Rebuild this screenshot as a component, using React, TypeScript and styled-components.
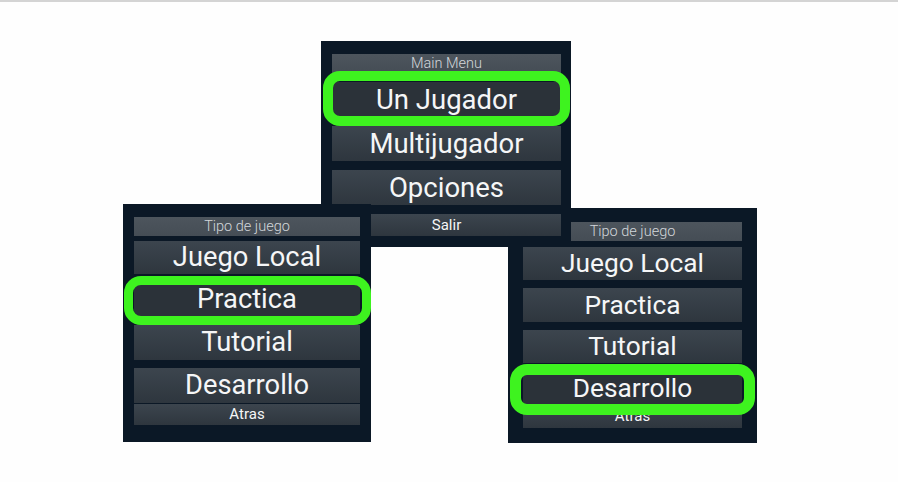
import React from "react";
import styled, { createGlobalStyle, css } from "styled-components";

const Global = createGlobalStyle`
  html, body { margin: 0; padding: 0; background: #fefefe; }
  body { font-family: Roboto, "Noto Sans", Arial, sans-serif; }
`;

const Page = styled.div`
  position: relative;
  width: 898px;
  height: 482px;
  overflow: hidden;
  background: #fefefe;
`;

const TopRule = styled.div`
  height: 2px;
  background: #d4d4d4;
`;

const Window = styled.section<{
  $x: number; $y: number; $w: number; $h: number;
  $pt: number; $pl: number; $pr: number; $z: number;
}>`
  position: absolute;
  left: ${(p) => p.$x}px;
  top: ${(p) => p.$y}px;
  width: ${(p) => p.$w}px;
  height: ${(p) => p.$h}px;
  z-index: ${(p) => p.$z};
  box-sizing: border-box;
  padding: ${(p) => `${p.$pt}px ${p.$pr}px 0 ${p.$pl}px`};
  background: #0b1826;
  display: flex;
  flex-direction: column;
`;

const Header = styled.div`
  flex: 0 0 19px;
  min-height: 0;
  background: linear-gradient(#4d555d, #454d55);
  color: #d3d7db;
  font-size: 14.5px;
  font-weight: 300;
  line-height: 19px;
  text-align: center;
  white-space: nowrap;
`;

const Item = styled.div<{
  $h: number; $mt: number; $fs: number; $small?: boolean;
  $selected?: boolean; $ring?: string; $rw?: number;
}>`
  position: relative;
  flex: 0 0 ${(p) => p.$h}px;
  min-height: 0;
  margin-top: ${(p) => p.$mt}px;
  background: linear-gradient(#3c454e, #2e363e);
  color: #f5f6f7;
  font-size: ${(p) => p.$fs}px;
  font-weight: 400;
  line-height: ${(p) => p.$h}px;
  text-align: center;
  white-space: nowrap;
  ${(p) =>
    p.$selected &&
    css`
      background: #2b3239;
      border-radius: 4px;
      &::after {
        content: "";
        position: absolute;
        inset: ${p.$ring};
        border: ${p.$rw}px solid #3ef31f;
        border-radius: 17px;
        z-index: 1;
      }
    `}
`;

type Row = { label: string; h: number; mt: number; small?: boolean; selected?: boolean };
type Menu = {
  x: number; y: number; w: number; h: number; pt: number; pl: number; pr: number; z: number;
  title: string; fs: number; ring: string; rw: number; rows: Row[];
};

const menus: Menu[] = [
  {
    x: 508, y: 208, w: 249, h: 235, pt: 14, pl: 15, pr: 15, z: 1,
    title: "Tipo de juego", fs: 26.3, ring: "-8px -13px -10px -13px", rw: 11,
    rows: [
      { label: "Juego Local", h: 33, mt: 6 },
      { label: "Practica", h: 34, mt: 8 },
      { label: "Tutorial", h: 33, mt: 8 },
      { label: "Desarrollo", h: 33, mt: 9, selected: true },
      { label: "Atras", h: 23, mt: 0, small: true },
    ],
  },
  {
    x: 321, y: 41, w: 250, h: 206, pt: 13, pl: 11, pr: 10, z: 2,
    title: "Main Menu", fs: 27.5, ring: "-11px -9px -9px -9px", rw: 10,
    rows: [
      { label: "Un Jugador", h: 35, mt: 9, selected: true },
      { label: "Multijugador", h: 35, mt: 9 },
      { label: "Opciones", h: 35, mt: 9 },
      { label: "Salir", h: 22, mt: 9, small: true },
    ],
  },
  {
    x: 123, y: 204, w: 248, h: 238, pt: 13, pl: 11, pr: 11, z: 3,
    title: "Tipo de juego", fs: 27.3, ring: "-6px -11px -9px -10px", rw: 9,
    rows: [
      { label: "Juego Local", h: 33, mt: 5 },
      { label: "Practica", h: 34, mt: 8, selected: true },
      { label: "Tutorial", h: 35, mt: 9 },
      { label: "Desarrollo", h: 35, mt: 8 },
      { label: "Atras", h: 21, mt: 1, small: true },
    ],
  },
];

export default function App() {
  return (
    <>
      <Global />
      <Page>
        <TopRule />
        {menus.map((m, i) => (
          <Window key={i} $x={m.x} $y={m.y} $w={m.w} $h={m.h} $pt={m.pt} $pl={m.pl} $pr={m.pr} $z={m.z}>
            <Header>{m.title}</Header>
            {m.rows.map((r) => (
              <Item
                key={r.label}
                $h={r.h}
                $mt={r.mt}
                $fs={r.small ? 15 : m.fs}
                $small={r.small}
                $selected={r.selected}
                $ring={m.ring}
                $rw={m.rw}
              >
                {r.label}
              </Item>
            ))}
          </Window>
        ))}
      </Page>
    </>
  );
}
